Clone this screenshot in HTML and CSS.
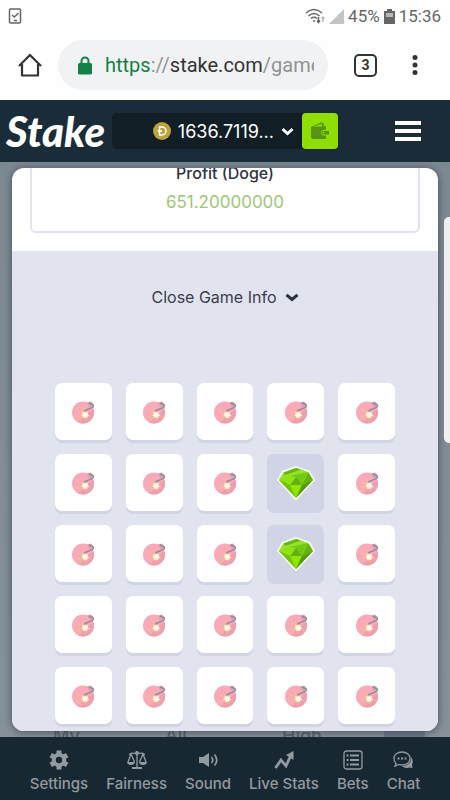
FILE: index.html
```html
<!DOCTYPE html>
<html lang="en">
<head>
  <meta charset="UTF-8">
  <meta name="viewport" content="width=device-width, initial-scale=1.0">
  <title>Stake</title>
  <link rel="stylesheet" href="styles.css">
</head>
<body>

  <!-- shared game icons -->
  <svg class="defs" width="0" height="0" aria-hidden="true">
    <symbol id="bomb" viewBox="0 0 24 24">
      <circle cx="12" cy="12.500" r="11" fill="#f9a9b8"/>
      <path d="M12 23.500A11 11 0 0 0 22.500 9L14 15 7 22.300Q9.500 23.500 12 23.500Z" fill="#ee9fae"/>
      <path d="M16 2.500l4-1 3 3-2 3-3-1z" fill="#dba1ad"/>
      <path d="M14 12V10.500L21.500 7.500Q23.500 6 21.500 4.500L18 3" fill="none" stroke="#8c8c98" stroke-width="1.400"/>
      <path d="M13 14L7 11M13 15L6 17M12 16L9 21M14 17L15 21M16 15L20 17M12 13L11 8" stroke="#f0c487" stroke-width="1.100" stroke-dasharray="3 1"/>
      <path d="M14 10.800l1 2 2.300-.8-.7 2.200 1.700 1.200-2 .9v2l-2-1-2 1-.1-2.200-2.100-.8 1.800-1.100-.7-2.100 2.200.6z" fill="#fffbe0"/>
    </symbol>
    <symbol id="gem" viewBox="0 0 40 36">
      <path d="M20 1L34 6 39 15 20 35.500 1 15 6 6z" fill="#fbfff4"/>
      <path d="M20 3L32.500 7.500 37 15 20 33 3 15 7.500 7.500z" fill="#7fd10d"/>
      <path d="M3 15L7.500 7.500 20 3 32 7 14 11z" fill="#97e02b"/>
      <path d="M8 7.500L20 3 25 4.500 9 10z" fill="#62b80c"/>
      <path d="M14 11L32.500 7.500 27 15 26 20 14 20 20 12z" fill="#74c914"/>
      <path d="M20 12L26 20H14z" fill="#66ae17"/>
      <path d="M3 15L14 11 20 12 14 20z" fill="#8ee411"/>
      <path d="M3 15L14 20 20 33z" fill="#70c30c"/>
      <path d="M14 20H26L20 33z" fill="#91e600"/>
      <path d="M37 15L26 20 20 33z" fill="#529a0e"/>
      <path d="M32.500 7.500L37 15 26 20z" fill="#65b012"/>
    </symbol>
  </svg>

  <div class="status-bar">
    <svg width="14" height="16" viewBox="0 0 14 16" fill="none" stroke="#666" stroke-width="1.500">
      <rect x="1.500" y="1" width="11" height="14" rx="1"/>
      <path d="M4 7l2.300 2L10.500 5M6 12.500h3"/>
    </svg>
    <div class="status-right">
      <svg width="20" height="16" viewBox="0 0 20 16" fill="none" stroke="#666" stroke-width="1.500">
        <path d="M1 5Q9-2 17 5M3.500 8Q9 3 14.500 8M6 10.500Q9 8 12 10.500"/>
        <circle cx="9" cy="13" r="1" fill="#666" stroke="none"/>
        <path d="M13.500 9v5M12 12.500l1.500 2 1.500-2"/>
        <path d="M18 14V9M16.500 10.500L18 9l1.500 1.500" stroke="#bbb"/>
      </svg>
      <svg width="15" height="15" viewBox="0 0 15 15"><path d="M15 0V15H0z" fill="#c4c4c4"/></svg>
      <span>45%</span>
      <svg width="11" height="15" viewBox="0 0 11 15">
        <path d="M3 0h5v2h3v13H0V2h3z" fill="#666"/>
        <path d="M2 4h7v4H2z" fill="#b8b8b8"/>
      </svg>
      <span>15:36</span>
    </div>
  </div>

  <div class="browser-bar">
    <button class="home" type="button" aria-label="Home">
      <svg width="24" height="24" viewBox="0 0 24 24" fill="none" stroke="#333" stroke-width="2.200" stroke-linejoin="round">
        <path d="M1 13L12 2 23 13M4 11V22.500H20V11"/>
      </svg>
    </button>
    <div class="address">
      <svg width="14" height="19" viewBox="0 0 14 19">
        <path d="M3.500 8V5a3.500 3.500 0 0 1 7 0v3" fill="none" stroke="#118245" stroke-width="2"/>
        <rect y="7" width="14" height="11.500" rx="1.500" fill="#118245"/>
      </svg>
      <div class="url" role="textbox" aria-label="Address" contenteditable="true" spellcheck="false"><span class="scheme">https</span><span class="muted">://</span>stake.com<span class="muted">/game</span></div>
    </div>
    <button class="tabs" type="button" aria-label="Open tabs">3</button>
    <button class="more" type="button" aria-label="More">
      <svg width="6" height="20" viewBox="0 0 6 20" fill="#333"><circle cx="3" cy="2.500" r="2.500"/><circle cx="3" cy="10" r="2.500"/><circle cx="3" cy="17.500" r="2.500"/></svg>
    </button>
  </div>

  <header class="header">
    <a class="logo" href="#">Stake</a>
    <div class="wallet">
      <button class="balance" type="button">
        <svg width="18" height="18" viewBox="0 0 18 18">
          <circle cx="9" cy="9" r="9" fill="#bea23b"/>
          <path d="M6.500 5H9a4 4 0 0 1 0 8H6.500zM4.500 9H9" fill="none" stroke="#fff" stroke-width="1.500"/>
        </svg>
        <span>1636.7119...</span>
        <svg width="13" height="9" viewBox="0 0 13 9"><path d="M1.500 2L6.500 6.500 11.500 2" fill="none" stroke="#fff" stroke-width="3"/></svg>
      </button>
      <button class="wallet-button" type="button" aria-label="Wallet">
        <svg width="18" height="18" viewBox="0 0 18 18">
          <path d="M0 5L10 0.500 12.500 1 13 4H15V8H12a2.800 2.800 0 0 0 0 5.500H15V17H1.500L0 15.500z" fill="#579410"/>
          <path d="M2 4.500L10.500 2 11.500 4.500z" fill="#8add05"/>
          <path d="M12 9H18v3.500H12a1.700 1.700 0 0 1 0-3.500z" fill="#579410"/>
          <circle cx="12.500" cy="10.800" r="1" fill="#8add05"/>
        </svg>
      </button>
    </div>
    <button class="menu" type="button" aria-label="Menu">
      <svg width="26" height="20" viewBox="0 0 26 20" fill="#fff"><path d="M0 0h26v4H0zM0 8h26v4H0zM0 16h26v4H0z"/></svg>
    </button>
  </header>

  <main class="page">
    <div class="backdrop">
      <span>My</span>
      <span>All</span>
      <span>High</span>
      <i></i>
    </div>
    <section class="modal">
      <div class="stats">
        <div class="profit">
          <div class="profit-title">Profit (Doge)</div>
          <div class="profit-value">651.20000000</div>
        </div>
      </div>
      <div class="game">
        <button class="close-info" type="button">
          Close Game Info
          <svg width="14" height="9" viewBox="0 0 14 9"><path d="M1.500 1.800L7 6.500 12.500 1.800" fill="none" stroke="#2b2e3e" stroke-width="3"/></svg>
        </button>
        <div class="board" id="board"></div>
      </div>
    </section>
    <div class="edge"></div>
  </main>

  <nav class="bottom-nav">
    <a href="#">
      <svg width="20" height="20" viewBox="0 0 20 20" fill="none" stroke="#929a9f">
        <circle cx="10" cy="10" r="5.200" stroke-width="4"/>
        <path d="M10 .5v4M10 15.500v4M1.800 5.200l3.400 2M14.800 12.800l3.400 2M1.800 14.800l3.400-2M14.800 7.200l3.400-2" stroke-width="5"/>
      </svg>
      Settings
    </a>
    <a href="#">
      <svg width="20" height="20" viewBox="0 0 20 20" fill="none" stroke="#929a9f" stroke-width="1.300">
        <path d="M10 1v16M2 4.500Q6 2 10 4 14 2 18 4.500M4 4L1 12M4 4l3.500 8M16 4l-3.500 8M16 4l3 8"/>
        <path d="M0 12H8Q7.500 15 4 15T0 12zM12 12h8q-.5 3-4 3t-4-3zM5 17h10v2H5z" fill="#929a9f" stroke="none"/>
        <circle cx="10" cy="3" r="1.300" fill="#929a9f"/>
      </svg>
      Fairness
    </a>
    <a href="#">
      <svg width="20" height="20" viewBox="0 0 20 20" fill="none" stroke="#929a9f" stroke-width="1.700">
        <path d="M1 7h4l6-4v14l-6-4H1z" fill="#929a9f" stroke="none"/>
        <path d="M13.500 7q2.500 3 0 6M16.500 4.500q4.500 5.500 0 11"/>
      </svg>
      Sound
    </a>
    <a href="#">
      <svg width="20" height="20" viewBox="0 0 20 20" fill="none" stroke="#929a9f" stroke-width="2.800">
        <path d="M1.500 18L7 10l5 6 5-11"/>
        <path d="M19.500 1v9L12 5z" fill="#929a9f" stroke="none"/>
      </svg>
      Live Stats
    </a>
    <a href="#">
      <svg width="20" height="20" viewBox="0 0 20 20" fill="none" stroke="#929a9f">
        <rect x="1" y="1" width="18" height="18" rx="2.500" stroke-width="1.300"/>
        <path d="M7 5.500h9M7 10h9M7 14.500h9M3.500 5.500h2M3.500 10h2M3.500 14.500h2" stroke-width="2"/>
      </svg>
      Bets
    </a>
    <a href="#">
      <svg width="20" height="20" viewBox="0 0 20 20" fill="none" stroke="#929a9f" stroke-width="1.300">
        <path d="M18 7q3 3.500 1 7.500l.5 3.500-3.500-.5q-4 1.500-7-1.500 9 0 9-9z" fill="#929a9f" stroke="none"/>
        <path d="M3 13.500Q1 11.500 1 8.500C1 4.500 4.500 2 9 2s8 2.500 8 6.500S13.500 15 9 15q-1.500 0-3-.5L2 16z"/>
        <path d="M4.500 8.500h2M8 8.500h2M11.500 8.500h2" stroke-width="2"/>
      </svg>
      Chat
    </a>
  </nav>

  <script>
    const gems = [8, 13];
    const board = document.getElementById("board");

    for (let i = 0; i < 25; i++) {
      const isGem = gems.includes(i);
      const tile = document.createElement("button");
      tile.type = "button";
      tile.className = isGem ? "tile open" : "tile";
      tile.setAttribute("aria-label", isGem ? "Gem" : "Mine");
      tile.innerHTML = `<svg><use href="#${isGem ? "gem" : "bomb"}"/></svg>`;
      board.appendChild(tile);
    }
  </script>

</body>
</html>
```

FILE: styles.css
```css
* {
  box-sizing: border-box;
}
body {
  margin: 0;
  min-height: 100vh;
  display: flex;
  flex-direction: column;
  font-family: Inter, "Liberation Sans", sans-serif;
  font-size: 16px;
  background-color: #fefefe;
}
button {
  font: inherit;
  color: inherit;
  background: none;
  border: none;
  padding: 0;
  cursor: pointer;
}
a {
  text-decoration: none;
}
svg {
  display: block;
  flex-shrink: 0;
}
.defs {
  position: absolute;
}

/* phone and browser bars */
.status-bar {
  height: 32px;
  padding: 0 9px 0 8px;
  display: flex;
  align-items: center;
  justify-content: space-between;
  font: 17px Roboto, sans-serif;
  color: #666;
}
.status-right {
  display: flex;
  align-items: center;
  gap: 4px;
}
.browser-bar {
  height: 68px;
  padding: 0 32px 2px 18px;
  display: flex;
  align-items: center;
}
.address {
  flex: 1;
  min-width: 0;
  height: 50px;
  margin: 0 26px 0 16px;
  padding: 0 14px 0 20px;
  display: flex;
  align-items: center;
  gap: 13px;
  border-radius: 25px;
  background-color: #f1f2f4;
}
.url {
  flex: 1;
  overflow: hidden;
  white-space: nowrap;
  font: 20px/28px Roboto, sans-serif;
  color: #333;
}
.url .scheme {
  color: #118245;
}
.url .muted {
  color: #929292;
}
.tabs {
  width: 23px;
  height: 23px;
  margin-right: 35px;
  border: 2px solid #333;
  border-radius: 5px;
  font: bold 14px/18px Roboto, sans-serif;
  color: #333;
}

/* site header */
.header {
  height: 62px;
  padding: 0 29px 0 6px;
  display: flex;
  align-items: center;
  background-color: #1a2c38;
  color: #fff;
}
.logo {
  width: 106px;
  font: italic 900 42px/50px Lato, sans-serif;
  color: #fff;
}
.wallet {
  display: flex;
  flex: 1;
  max-width: 226px;
  height: 36px;
}
.balance {
  flex: 1;
  padding-right: 8px;
  display: flex;
  align-items: center;
  justify-content: flex-end;
  gap: 7px;
  border-radius: 5px 0 0 5px;
  background-color: #121e26;
  font-size: 18px;
}
.wallet-button {
  width: 36px;
  display: grid;
  place-items: center;
  border-radius: 4px;
  background-color: #8fdf05;
}
.menu {
  margin-left: auto;
}

/* game modal */
.page {
  position: relative;
  flex: 1;
  display: flex;
  padding: 6px 12px;
  overflow: hidden;
  background: linear-gradient(#7d8992, #879199);
}
.backdrop {
  position: absolute;
  inset: auto 0 0 0;
  height: 10px;
  padding-left: 53px;
  display: grid;
  grid-template-columns: 112px 117px 102px 41px;
  overflow: hidden;
  font-size: 18px;
  line-height: 18px;
  font-weight: 500;
  color: #59646e;
}
.backdrop i {
  background-color: #6f7b88;
}
.modal {
  position: relative;
  flex: 1;
  display: flex;
  flex-direction: column;
  border-radius: 12px;
  overflow: hidden;
  background-color: #fff;
  box-shadow: 0 1px 8px rgba(30, 40, 60, 0.6);
}
.stats {
  height: 83px;
  padding: 0 18px 18px;
  display: flex;
  flex-direction: column;
  justify-content: flex-end;
}
.profit {
  padding: 20px 0 14px;
  border: 2px solid #e1e3ef;
  border-radius: 6px;
  text-align: center;
}
.profit-title {
  line-height: 28px;
  font-weight: 500;
  color: #2f3242;
}
.profit-value {
  font-size: 17px;
  line-height: 30px;
  color: #9dc774;
}
.game {
  flex: 1;
  padding: 30px 43px 7px;
  background-color: #e1e3ef;
}
.close-info {
  height: 32px;
  margin: 0 auto 70px;
  display: flex;
  align-items: center;
  gap: 8px;
  color: #3a3d4e;
}
.board {
  display: grid;
  grid-template-columns: repeat(5, 1fr);
  gap: 14px;
}
.tile {
  height: 57px;
  display: grid;
  place-items: center;
  border-radius: 7px;
  background-color: #fff;
  box-shadow: 0 3px 0 #d0d4e3;
}
.tile svg {
  width: 24px;
  height: 24px;
}
.tile.open {
  background-color: #d1d4e4;
  box-shadow: 0 2px 0 #d1d4e4;
}
.tile.open svg {
  width: 40px;
  height: 36px;
}

/* handle of the side panel */
.edge {
  position: absolute;
  top: 55px;
  right: 0;
  width: 6px;
  height: 226px;
  border-radius: 5px 0 0 5px;
  background-color: #f0f0f1;
}

.bottom-nav {
  height: 63px;
  padding-top: 13px;
  display: flex;
  justify-content: center;
  gap: 18px;
  background-color: #182833;
}
.bottom-nav a {
  display: flex;
  flex-direction: column;
  align-items: center;
  gap: 4px;
  font-size: 15px;
  line-height: 20px;
  font-weight: 500;
  white-space: nowrap;
  color: #929a9f;
}
```
